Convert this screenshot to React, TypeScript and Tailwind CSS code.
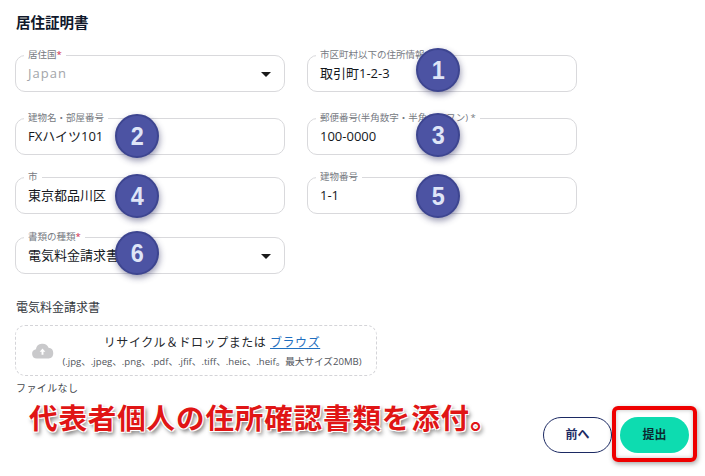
const font = { fontFamily: '"Open Sans", "Noto Sans CJK JP", sans-serif' }

function Badge({ n, className }: { n: number; className: string }) {
  return (
    <div
      className={`absolute flex size-[44px] items-center justify-center rounded-full border-2 border-[#3d4590] bg-[#4c53a3] text-[26px] font-bold text-[#dfe5f7] shadow-[1px_3px_6px_rgba(40,40,90,0.45)] ${className}`}
      style={{ fontFamily: '"Liberation Sans", sans-serif' }}
    >
      <span className="scale-x-[0.9]">{n}</span>
    </div>
  )
}

function Caret() {
  return (
    <svg viewBox="0 0 10 5" className="absolute right-[13px] top-[16px] h-[5px] w-[10px]">
      <path d="M0 0h10L5 5z" fill="#1a1a1a" />
    </svg>
  )
}

function Field({
  label,
  value,
  required,
  muted,
  select,
  className,
  children,
}: {
  label: string
  value: string
  required?: boolean
  muted?: boolean
  select?: boolean
  className?: string
  children?: React.ReactNode
}) {
  return (
    <div className={`relative h-[37px] w-[270px] rounded-[10px] border border-[#d9d9dc] bg-white ${className ?? ''}`}>
      <span className="absolute -top-[7px] left-[8px] whitespace-nowrap bg-white px-[4px] text-[9.5px] leading-[12px] text-[#767a82]">
        {label}
        {required && <span className="text-[#d0284a]">*</span>}
      </span>
      <div className={`flex h-full items-center pl-[12px] text-[13px] ${muted ? 'tracking-[1px] text-[#a3a5a9]' : 'text-[#15181d]'}`}>
        {value}
      </div>
      {select && <Caret />}
      {children}
    </div>
  )
}

export default function App() {
  return (
    <div className="relative h-[476px] w-[705px] overflow-hidden bg-white pl-[15px] pt-[13px]" style={font}>
      <h2 className="pl-px text-[14.5px] font-bold leading-[20px] text-[#10182b]">居住証明書</h2>

      {/* form fields */}
      <div className="mt-[22px] grid grid-cols-[270px_270px] gap-x-[22px]">
        <Field label="居住国" value="Japan" required muted select />
        <Field label="市区町村以下の住所情報" value="取引町1-2-3">
          <Badge n={1} className="left-[108px] -top-[8px]" />
        </Field>
        <Field label="建物名・部屋番号" value="FXハイツ101" className="mt-[26px]">
          <Badge n={2} className="left-[99px] -top-[5px]" />
        </Field>
        <Field label="郵便番号(半角数字・半角ハイフン) *" value="100-0000" className="mt-[26px]">
          <Badge n={3} className="left-[108px] -top-[6px]" />
        </Field>
        <Field label="市" value="東京都品川区" className="mt-[22px]">
          <Badge n={4} className="left-[99px] -top-[4px]" />
        </Field>
        <Field label="建物番号" value="1-1" className="mt-[22px]">
          <Badge n={5} className="left-[108px] -top-[4px]" />
        </Field>
        <Field label="書類の種類" value="電気料金請求書" required select className="mt-[23px]">
          <Badge n={6} className="left-[99px] -top-[7px]" />
        </Field>
      </div>

      {/* upload */}
      <div className="mt-[25px] pl-px text-[12px] leading-[18px] text-[#33373d]">電気料金請求書</div>
      <div className="mt-[8px] flex h-[51px] w-[362px] items-center rounded-[10px] border border-dashed border-[#d4d4d8] pl-[15px]">
        <svg viewBox="0 0 24 18" className="h-[17px] w-[23px] shrink-0">
          <path
            d="M6 17.5a5 5 0 0 1-1-9.9 7 7 0 0 1 13.4-1.4A5.7 5.7 0 0 1 18.5 17.5z"
            fill="#c9c9cb"
          />
          <path d="M12 7l3 3.2h-2v3.3h-2v-3.3H9z" fill="#fff" />
        </svg>
        <div className="ml-[6px] flex w-[304px] flex-col items-center">
          <div className="whitespace-nowrap text-[12px] leading-[18px] tracking-[0.55px] text-[#25282d]">
            リサイクル＆ドロップまたは <span className="text-[#1f6fbf] underline">ブラウズ</span>
          </div>
          <div className="mt-[4px] whitespace-nowrap text-[9.6px] leading-[12px] text-[#50545b]">
            (.jpg、.jpeg、.png、.pdf、.jfif、.tiff、.heic、.heif。最大サイズ20MB)
          </div>
        </div>
      </div>
      <div className="mt-[5px] pl-px text-[10px] leading-[15px] tracking-[0.4px] text-[#44484e]">ファイルなし</div>

      {/* buttons */}
      <div className="mt-[21px] flex justify-end gap-[8px] pr-[16px]">
        <button className="h-[36px] w-[69px] rounded-full border border-[#1c2a63] bg-white text-[12px] font-bold text-[#1c2a63]">
          前へ
        </button>
        <div className="relative">
          <button className="h-[36px] w-[69px] rounded-full bg-[#0ddcb0] text-[12px] font-bold text-[#0c2a30]">
            提出
          </button>
          <div className="absolute -bottom-[9px] -left-[8px] -right-[8px] -top-[11px] rounded-[6px] border-[4px] border-[#ee0000] shadow-[1px_2px_5px_rgba(0,0,0,0.35),inset_0_0_4px_rgba(0,0,0,0.25)]" />
        </div>
      </div>

      {/* annotation */}
      <div
        className="absolute left-[29px] top-[399px] whitespace-nowrap text-[28.5px] font-bold leading-[36px] tracking-[0.9px] text-[#e01515] [text-shadow:-1px_-1px_0_#fff,1px_-1px_0_#fff,-1px_1px_0_#fff,1px_1px_0_#fff,2px_3px_4px_rgba(0,0,0,0.6)]"
        style={{ fontFamily: '"Noto Sans CJK JP", sans-serif' }}
      >
        代表者個人の住所確認書類を添付。
      </div>
    </div>
  )
}
